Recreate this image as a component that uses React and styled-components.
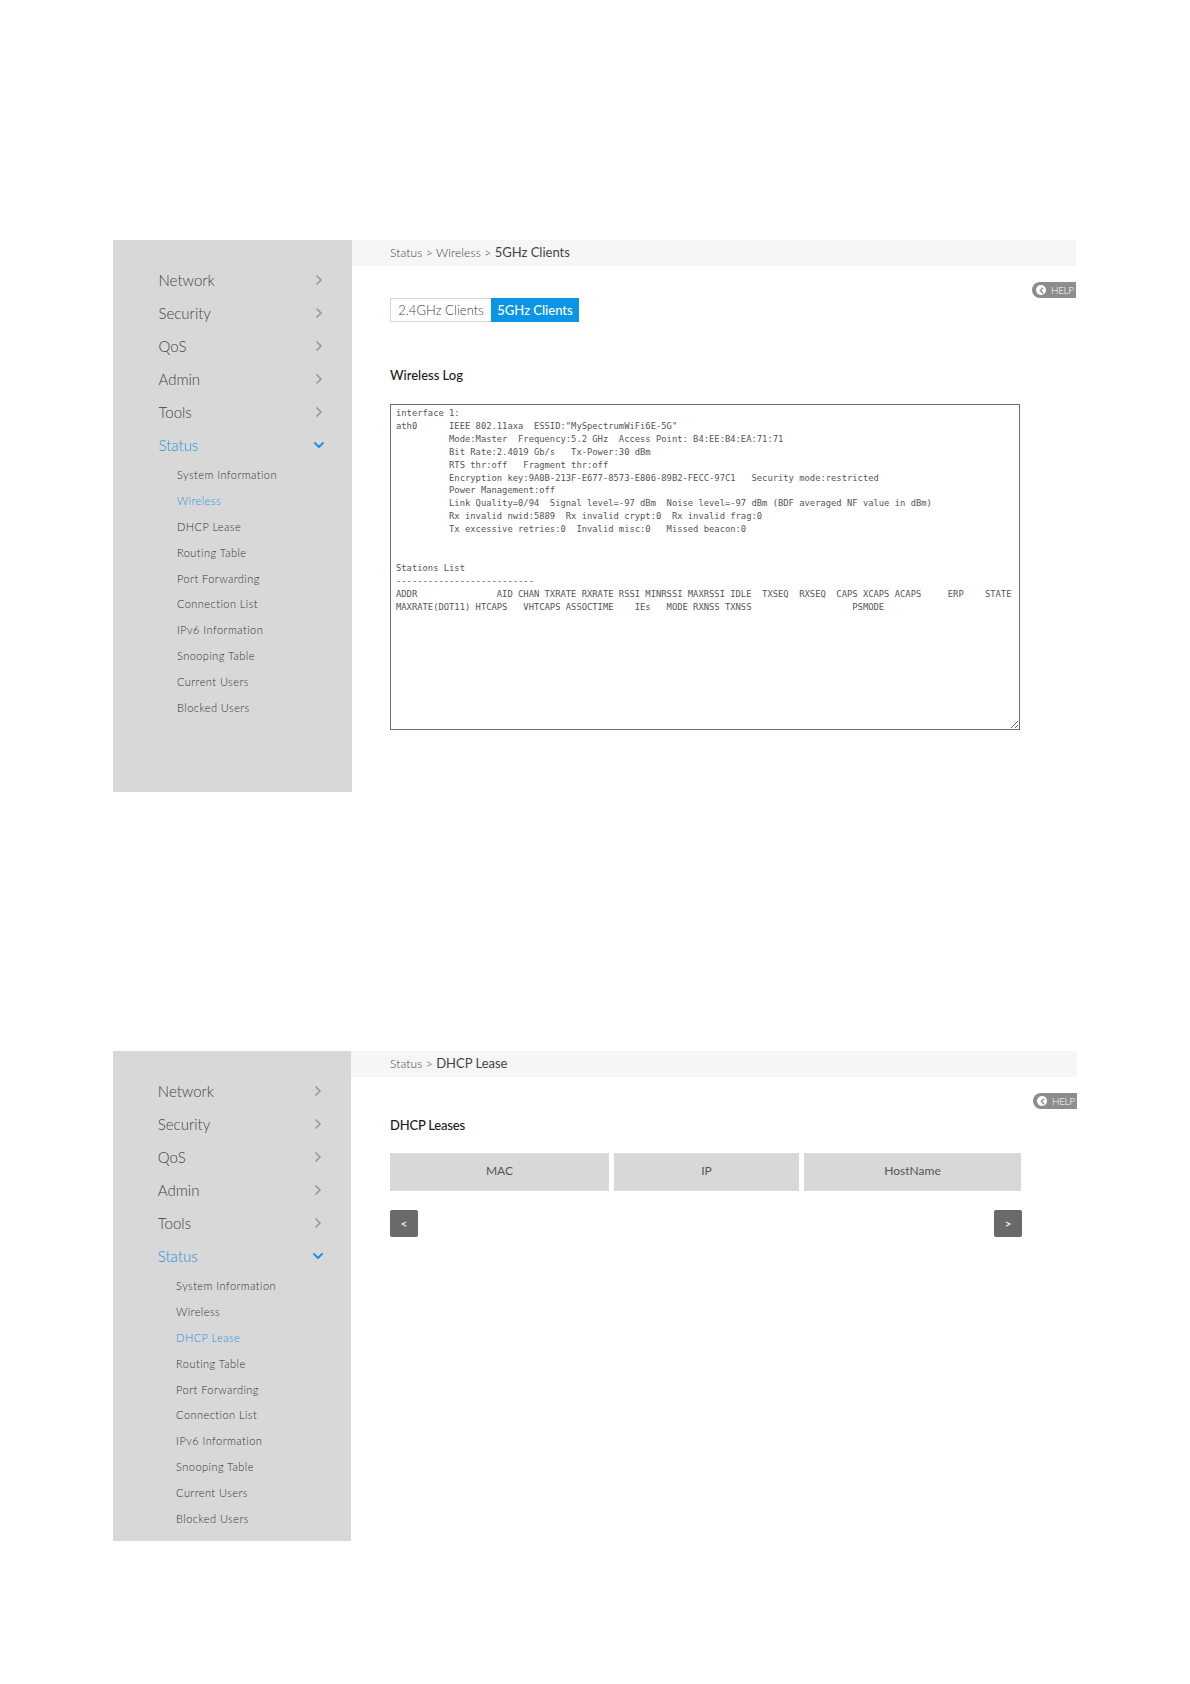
import React from 'react';
import styled, { createGlobalStyle } from 'styled-components';
import { ChevronRight, ChevronDown, ChevronLeft } from 'lucide-react';

const Global = createGlobalStyle`
  html, body { margin: 0; padding: 0; background: #fff; }
  body { font-family: Lato, "Liberation Sans", sans-serif; color: #555; }
`;

const Page = styled.div`
  width: 1190px;
  height: 1684px;
  box-sizing: border-box;
  padding: 240px 0 0 113px;
  display: flex;
  flex-direction: column;
  gap: 259px;
`;

const Panel = styled.section`
  display: grid;
  grid-template-columns: ${p => p.$side}px 1fr;
  width: ${p => p.$width}px;
  height: ${p => p.$height}px;
`;

const Sidebar = styled.nav`
  background: #d8d8d8;
  padding: 23px 0 0 ${p => p.$inset}px;
  display: flex;
  flex-direction: column;
`;

const MenuRow = styled.div`
  height: 33px;
  display: flex;
  align-items: center;
  justify-content: space-between;
  padding-right: 25px;
  font-size: 15px;
  font-weight: 300;
  color: ${p => (p.$active ? '#1f94dc' : '#444')};
  svg { color: ${p => (p.$active ? '#1f94dc' : '#999')}; }
`;

const SubList = styled.div`
  display: flex;
  flex-direction: column;
  margin-top: 1px;
  padding-left: ${p => p.$indent}px;
`;

const SubRow = styled.div`
  height: 25.8px;
  display: flex;
  align-items: center;
  font-size: 11px;
  letter-spacing: 0.45px;
  font-weight: 300;
  color: ${p => (p.$active ? '#1f8ee0' : '#333')};
`;

const Main = styled.div`
  position: relative;
  min-width: 0;
`;

const Crumbs = styled.div`
  height: 26px;
  box-sizing: border-box;
  padding: 0 0 2px ${p => p.$pad}px;
  background: #f6f6f7;
  display: flex;
  align-items: center;
  font-size: 12px;
  font-weight: 300;
  letter-spacing: 0.1px;
  color: #444;
  white-space: pre;
`;

const CrumbNow = styled.span`
  font-size: 13px;
  font-weight: 400;
  color: #444;
  letter-spacing: 0;
`;

const Help = styled.div`
  position: absolute;
  top: 42px;
  right: 0;
  width: 44px;
  height: 16px;
  box-sizing: border-box;
  background: #8d8d8d;
  border-radius: 8px 0 0 8px;
  display: flex;
  align-items: center;
  gap: 5px;
  padding-left: 4px;
  color: #fff;
  font-size: 10px;
  font-weight: 300;
  letter-spacing: -0.4px;
`;

const HelpDot = styled.span`
  width: 10px;
  height: 10px;
  border-radius: 50%;
  background: #fff;
  color: #8d8d8d;
  display: flex;
  align-items: center;
  justify-content: center;
`;

const Body = styled.div`
  padding-left: ${p => p.$pad}px;
  display: flex;
  flex-direction: column;
`;

const Tabs = styled.div`
  margin-top: 32px;
  display: flex;
  height: 24px;
`;

const Tab = styled.div`
  box-sizing: border-box;
  width: ${p => p.$width}px;
  display: flex;
  align-items: center;
  justify-content: center;
  font-size: 13px;
  letter-spacing: ${p => (p.$on ? 0 : 0.05)}px;
  font-weight: ${p => (p.$on ? 500 : 300)};
  background: ${p => (p.$on ? '#0a95e6' : '#fff')};
  color: ${p => (p.$on ? '#fff' : '#444')};
  border: 1px solid ${p => (p.$on ? '#0a95e6' : '#d4d4d4')};
  border-right-width: ${p => (p.$on ? 1 : 0)}px;
`;

const Heading = styled.h2`
  margin: ${p => p.$top}px 0 0;
  font-size: 13px;
  line-height: 16px;
  font-weight: 500;
  letter-spacing: ${p => p.$track}px;
  color: #1c1c1c;
`;

const Log = styled.textarea`
  display: block;
  margin-top: 21px;
  width: 630px;
  height: 326px;
  box-sizing: border-box;
  padding: 2px 5px;
  border: 1px solid #6c6c78;
  border-radius: 0;
  outline: none;
  background: #fff;
  font-family: "DejaVu Sans Mono", "Liberation Mono", monospace;
  font-size: 8.82px;
  line-height: 12.9px;
  color: #555;
  white-space: pre-wrap;
  overflow: hidden;
`;

const Table = styled.div`
  margin-top: 20px;
  width: 631px;
  display: grid;
  grid-template-columns: 219px 185px 217px;
  gap: 5px;
`;

const HeadCell = styled.div`
  height: 38px;
  box-sizing: border-box;
  padding-bottom: 3px;
  background: #d8d8d8;
  display: flex;
  align-items: center;
  justify-content: center;
  font-size: 12px;
  font-weight: 400;
  color: #555;
`;

const Pager = styled.div`
  margin-top: 19px;
  width: 632px;
  display: flex;
  justify-content: space-between;
`;

const PageButton = styled.button`
  width: 28px;
  height: 27px;
  padding: 0;
  border: 0;
  border-radius: 2px;
  background: #6a6a6a;
  color: #fff;
  font-family: inherit;
  font-size: 12px;
`;

const log = `interface 1:
ath0      IEEE 802.11axa  ESSID:"MySpectrumWiFi6E-5G"
          Mode:Master  Frequency:5.2 GHz  Access Point: B4:EE:B4:EA:71:71
          Bit Rate:2.4019 Gb/s   Tx-Power:30 dBm
          RTS thr:off   Fragment thr:off
          Encryption key:9A0B-213F-E677-8573-E806-89B2-FECC-97C1   Security mode:restricted
          Power Management:off
          Link Quality=0/94  Signal level=-97 dBm  Noise level=-97 dBm (BDF averaged NF value in dBm)
          Rx invalid nwid:5889  Rx invalid crypt:0  Rx invalid frag:0
          Tx excessive retries:0  Invalid misc:0   Missed beacon:0


Stations List
--------------------------
ADDR               AID CHAN TXRATE RXRATE RSSI MINRSSI MAXRSSI IDLE  TXSEQ  RXSEQ  CAPS XCAPS ACAPS     ERP    STATE
MAXRATE(DOT11) HTCAPS   VHTCAPS ASSOCTIME    IEs   MODE RXNSS TXNSS                   PSMODE`;

const menu = ['Network', 'Security', 'QoS', 'Admin', 'Tools'];
const subs = ['System Information', 'Wireless', 'DHCP Lease', 'Routing Table', 'Port Forwarding', 'Connection List', 'IPv6 Information', 'Snooping Table', 'Current Users', 'Blocked Users'];

function Side({ active, inset, indent }) {
  return (
    <Sidebar $inset={inset}>
      {menu.map(m => (
        <MenuRow key={m}>{m}<ChevronRight size={16} strokeWidth={2.6} /></MenuRow>
      ))}
      <MenuRow $active>Status<ChevronDown size={16} strokeWidth={3} /></MenuRow>
      <SubList $indent={indent}>
        {subs.map(s => <SubRow key={s} $active={s === active}>{s}</SubRow>)}
      </SubList>
    </Sidebar>
  );
}

function HelpTag() {
  return (
    <Help>
      <HelpDot><ChevronLeft size={9} strokeWidth={4} /></HelpDot>
      HELP
    </Help>
  );
}

export default function App() {
  return (
    <>
      <Global />
      <Page>
        <Panel $side={239} $width={963} $height={552}>
          <Side active="Wireless" inset={45.5} indent={18.5} />
          <Main>
            <Crumbs $pad={38}>Status &gt; Wireless &gt; <CrumbNow>5GHz Clients</CrumbNow></Crumbs>
            <HelpTag />
            <Body $pad={38}>
              <Tabs>
                <Tab $width={101}>2.4GHz Clients</Tab>
                <Tab $width={88} $on>5GHz Clients</Tab>
              </Tabs>
              <Heading $top={45} $track={0}>Wireless Log</Heading>
              <Log readOnly value={log} spellCheck={false} />
            </Body>
          </Main>
        </Panel>
        <Panel $side={238} $width={964} $height={490}>
          <Side active="DHCP Lease" inset={44.8} indent={18.3} />
          <Main>
            <Crumbs $pad={39}>Status &gt; <CrumbNow>DHCP Lease</CrumbNow></Crumbs>
            <HelpTag />
            <Body $pad={39}>
              <Heading $top={40} $track={-0.2}>DHCP Leases</Heading>
              <Table>
                <HeadCell>MAC</HeadCell>
                <HeadCell>IP</HeadCell>
                <HeadCell>HostName</HeadCell>
              </Table>
              <Pager>
                <PageButton>&lt;</PageButton>
                <PageButton>&gt;</PageButton>
              </Pager>
            </Body>
          </Main>
        </Panel>
      </Page>
    </>
  );
}
